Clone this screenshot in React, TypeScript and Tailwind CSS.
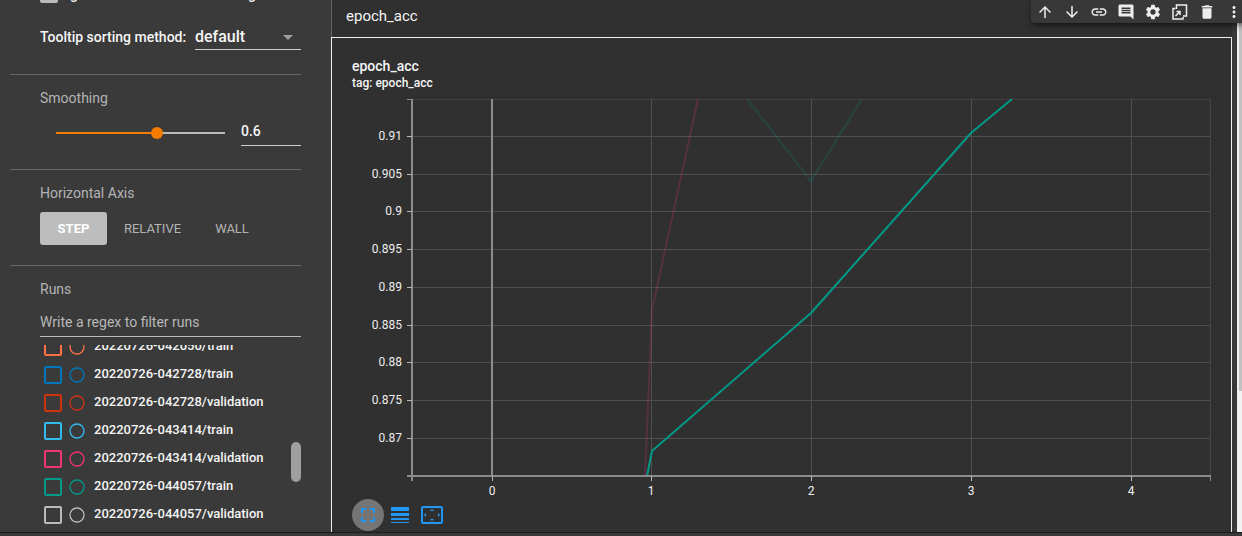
import React from "react";
import {
  MdArrowUpward,
  MdArrowDownward,
  MdLink,
  MdComment,
  MdSettings,
  MdDelete,
  MdMoreVert,
} from "react-icons/md";

const runs = [
  { name: "20220726-042050/train", color: "text-[#ff7043]" },
  { name: "20220726-042728/train", color: "text-[#0077bb]" },
  { name: "20220726-042728/validation", color: "text-[#cc3311]" },
  { name: "20220726-043414/train", color: "text-[#33bbee]" },
  { name: "20220726-043414/validation", color: "text-[#ee3377]" },
  { name: "20220726-044057/train", color: "text-[#009988]" },
  { name: "20220726-044057/validation", color: "text-[#bbbbbb]" },
];

const yTicks = [
  { y: 38, label: "0.91" },
  { y: 76, label: "0.905" },
  { y: 113, label: "0.9" },
  { y: 151, label: "0.895" },
  { y: 189, label: "0.89" },
  { y: 227, label: "0.885" },
  { y: 264, label: "0.88" },
  { y: 302, label: "0.875" },
  { y: 340, label: "0.87" },
];

const xTicks = [140, 299, 459, 619, 779];

function Chart() {
  return (
    <svg
      viewBox="0 0 859 400"
      className="block h-auto w-full font-['Roboto',sans-serif] text-[12px]"
      role="img"
      aria-label="epoch_acc"
    >
      <g fill="none" stroke="#4f4f4f" strokeWidth="1">
        <path d="M60 1.5H859" stroke="#404040" />
        {yTicks.map((t) => (
          <path key={t.label} d={`M60 ${t.y + 0.5}H859`} />
        ))}
        {xTicks.map((x) => (
          <path key={x} d={`M${x + 0.5} 1V378`} />
        ))}
        <path d="M858.5 1V378" stroke="#444444" />
      </g>
      <g fill="none" strokeWidth="2" strokeLinejoin="round">
        <path d="M293 378L300 212L346 1" stroke="#ee3377" opacity="0.2" />
        <path d="M395 1L459 83L510 1" stroke="#009988" opacity="0.2" />
        <path d="M295 378L300 353L459 215L619 35L660 1" stroke="#009988" />
      </g>
      <g fill="none" stroke="#8c8c8c">
        <path d="M60 1V383M55 378H859" strokeWidth="2" />
        <path d="M140 1V378" strokeWidth="2" />
        <path d="M55 1.500H60M858.500 378V383" />
        {yTicks.map((t) => (
          <path key={t.label} d={`M55 ${t.y + 0.5}H60`} stroke="#bbb" />
        ))}
        {xTicks.map((x) => (
          <path key={x} d={`M${x + 0.5} 378V383`} stroke="#bbb" />
        ))}
      </g>
      <g fill="#eeeeee">
        {yTicks.map((t) => (
          <text key={t.label} x="50" y={t.y + 4} textAnchor="end">
            {t.label}
          </text>
        ))}
        {xTicks.map((x, i) => (
          <text key={x} x={x} y="397" textAnchor="middle">
            {i}
          </text>
        ))}
      </g>
    </svg>
  );
}

function MirrorIcon() {
  return (
    <svg viewBox="0 0 18 18" className="size-[18px]" fill="none" stroke="currentColor" strokeWidth="1.5">
      <path d="M5.500 6V2h10v11H12" />
      <path d="M4.500 5.500H2V16h10v-2" />
      <path d="M4.500 13L9 8.500M5.500 8.500H9V12" />
    </svg>
  );
}

const tools = [
  { label: "Move cell up", icon: <MdArrowUpward className="size-[18px]" /> },
  { label: "Move cell down", icon: <MdArrowDownward className="size-[18px]" /> },
  { label: "Link to cell", icon: <MdLink className="size-[18px]" /> },
  { label: "Add a comment", icon: <MdComment className="size-[18px]" /> },
  { label: "Open settings", icon: <MdSettings className="size-[18px]" /> },
  { label: "Mirror cell in tab", icon: <MirrorIcon /> },
  { label: "Delete cell", icon: <MdDelete className="size-[18px]" /> },
  { label: "More cell actions", icon: <MdMoreVert className="size-[18px]" /> },
];

function CellToolbar() {
  return (
    <div
      role="toolbar"
      aria-label="Cell"
      className="absolute top-0 -right-[15px] flex h-[23px] rounded-b-sm bg-[#383838] pt-px text-[#eeeeee] shadow-md shadow-black/40"
    >
      {tools.map((t) => (
        <button key={t.label} type="button" aria-label={t.label} className="flex w-[27px] items-center justify-center">
          {t.icon}
        </button>
      ))}
    </div>
  );
}

function Sidebar() {
  return (
    <aside className="flex w-[331px] shrink-0 flex-col bg-[#3a3a3a] pr-[30px] pl-[10px]">
      <section className="flex h-[75px] flex-col border-b border-[#666666] pl-[30px]">
        <label className="flex h-1 shrink-0 items-end overflow-hidden text-[14px] font-medium">
          <span className="flex h-5 items-center gap-2">
            <input type="checkbox" className="size-[18px] appearance-none rounded-xs border-2 border-[#bbbbbb] bg-[#bbbbbb]" />
            Ignore outliers in chart scaling
          </span>
        </label>
        <div className="flex items-center justify-between pt-[21px]">
          <label htmlFor="sort" className="text-[14px] font-medium">
            Tooltip sorting method:
          </label>
          <div className="relative w-[106px] border-b border-[#cccccc]">
            <select id="sort" className="block h-6 w-full appearance-none bg-transparent text-[16px] font-medium">
              <option>default</option>
            </select>
            <svg viewBox="0 0 10 5" className="pointer-events-none absolute top-[10px] right-2 h-[5px] w-[10px]" fill="#9e9e9e">
              <path d="M0 0h10L5 5z" />
            </svg>
          </div>
        </div>
      </section>

      <section className="h-[95px] border-b border-[#666666] pt-[13px] pl-[30px]">
        <label htmlFor="smoothing" className="block text-[14px] leading-5 text-[#b4b4b4]">
          Smoothing
        </label>
        <div className="flex justify-between pt-[11px] pl-[10px]">
          <input
            id="smoothing"
            type="range"
            min="0"
            max="1"
            step="0.01"
            defaultValue="0.6"
            className="mt-2 h-3 w-[181px] appearance-none bg-[linear-gradient(to_right,#f57c00_60%,#bbbbbb_60%)] bg-[length:169px_2px] bg-center bg-no-repeat [&::-webkit-slider-thumb]:size-3 [&::-webkit-slider-thumb]:appearance-none [&::-webkit-slider-thumb]:rounded-full [&::-webkit-slider-thumb]:bg-[#f57c00]"
          />
          <input
            type="text"
            aria-label="Smoothing value"
            defaultValue="0.6"
            className="h-[27px] w-[60px] border-b border-[#cccccc] bg-transparent pb-0.5 text-[14px] font-medium"
          />
        </div>
      </section>

      <section className="h-24 border-b border-[#666666] pt-[13px] pl-[30px]">
        <h3 className="text-[14px] leading-5 text-[#b4b4b4]">Horizontal Axis</h3>
        <div className="flex pt-[9px] text-[13px] text-[#b4b4b4]">
          <button type="button" className="h-[33px] w-[67px] rounded-[3px] bg-[#bdbdbd] font-bold text-white">
            STEP
          </button>
          <button type="button" className="h-[33px] w-[91px]">
            RELATIVE
          </button>
          <button type="button" className="h-[33px] w-[68px]">
            WALL
          </button>
        </div>
      </section>

      <section className="pt-[13px] pl-[30px]">
        <h3 className="text-[14px] leading-5 text-[#b4b4b4]">Runs</h3>
        <input
          type="text"
          aria-label="Write a regex to filter runs"
          placeholder="Write a regex to filter runs"
          className="mt-2 block h-[30px] w-full border-b border-[#bbbbbb] bg-transparent text-[14px] placeholder:text-[#b8b8b8]"
        />
        <div className="relative mt-2 h-[187px] overflow-hidden">
          <ul className="-mt-[13px]">
            {runs.map((r) => (
              <li key={r.name} className="flex h-7 pl-1">
                <label className="flex items-center gap-[7px] text-[13px] font-medium">
                  <input
                    type="checkbox"
                    className={`mt-0.5 size-[18px] appearance-none rounded-xs border-2 border-current ${r.color}`}
                  />
                  <svg viewBox="0 0 16 16" className={`mt-0.5 size-4 ${r.color}`} fill="none" stroke="currentColor" strokeWidth="1.3">
                    <circle cx="8" cy="8" r="7" />
                  </svg>
                  <span className="pl-[2px]">{r.name}</span>
                </label>
              </li>
            ))}
          </ul>
          <div className="absolute top-[97px] right-0 h-10 w-[10px] rounded-full bg-[#9e9e9e]" />
        </div>
      </section>
    </aside>
  );
}

export default function App() {
  return (
    <div className="overflow-hidden bg-[#383838] font-['Roboto',sans-serif] text-[#f5f5f5]">
      <div className="flex border-b border-[#1c1c1c]">
        <Sidebar />
        <main className="relative flex min-w-0 grow flex-col bg-[#303030]">
          <h2 className="flex h-[37px] items-center border-l border-[#666666] pb-[5px] pl-[14px] text-[15px]">epoch_acc</h2>
          <CellToolbar />
          <section className="grow border border-b-0 border-[#eeeeee] pr-5 pl-5">
            <h3 className="pt-[19px] text-[14px] leading-[19px] font-medium">epoch_acc</h3>
            <p className="text-[12px] leading-[14px] font-medium">tag: epoch_acc</p>
            <div className="pt-2">
              <Chart />
            </div>
            <div className="flex items-center pt-px text-[#2196f3]">
              <button type="button" aria-label="Fit to screen" className="flex size-8 items-center justify-center rounded-full bg-[#757575]">
                <svg viewBox="0 0 14 14" className="size-[14px]" fill="currentColor">
                  <path d="M2 9H0v5h5v-2H2V9zM0 5h2V2h3V0H0v5zm12 7H9v2h5V9h-2v3zM9 0v2h3v3h2V0H9z" />
                </svg>
              </button>
              <button type="button" aria-label="Toggle log scale" className="flex w-8 items-center justify-center">
                <svg viewBox="0 0 18 16" className="h-4 w-[18px]" fill="currentColor">
                  <path d="M0 0h18v4H0zM0 6h18v3H0zM0 11h18v2H0zM0 15h18v1H0z" />
                </svg>
              </button>
              <button type="button" aria-label="Fit domain to data" className="flex w-8 items-center justify-center">
                <svg viewBox="0 0 22 18" className="h-[18px] w-[22px]" fill="currentColor">
                  <path d="M20 0H2C.9 0 0 .9 0 2v14c0 1.100.9 2 2 2h18c1.100 0 2-.9 2-2V2c0-1.100-.9-2-2-2zm0 16H2V2h18v14zM11 3L9 5h4zM11 15l2-2H9zM3 9l2 2V7zM19 9l-2-2v4z" />
                </svg>
              </button>
            </div>
          </section>
        </main>
        <div className="flex w-[10px] shrink-0 justify-end">
          <div className="w-[5px] bg-[#f1f1f1] pl-[2px]">
            <div className="h-[391px] bg-[#c1c1c1]" />
          </div>
        </div>
      </div>
      <div className="h-1" />
    </div>
  );
}
